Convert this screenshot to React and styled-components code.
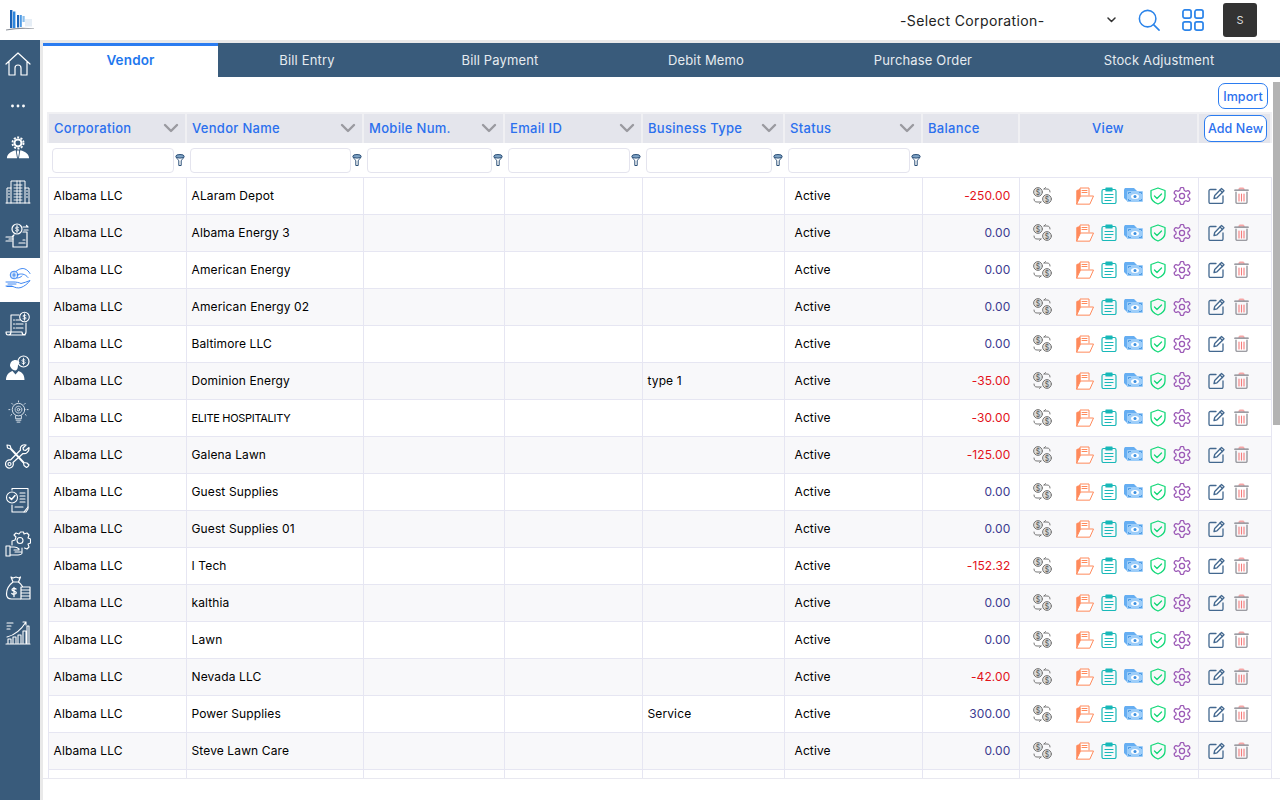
import React from 'react';
import styled, { createGlobalStyle } from 'styled-components';

const Global = createGlobalStyle`
  html, body { margin: 0; height: 100%; overflow: hidden; background: #fff; }
  body { font-family: Inter, "Liberation Sans", sans-serif; color: #000; }
  * { box-sizing: border-box; }
`;
const Page = styled.div`height: 800px; display: flex; flex-direction: column;`;
const Header = styled.header`height: 40px; flex: none; display: flex; align-items: center; background: #fff;`;
const LogoBox = styled.div`width: 40px; height: 40px; display: flex; align-items: center; justify-content: center;`;
const CorpSelect = styled.div`margin-left: auto; width: 216px; display: flex; align-items: center; justify-content: space-between; font-size: 14px; letter-spacing: .38px; color: #222;`;
const HeadIcon = styled.button`border: 0; background: none; padding: 0; display: flex; margin-left: 22px;`;
const Avatar = styled.div`width: 34px; height: 34px; margin: 0 23px 0 19px; background: #333; color: #ddd; border-radius: 3px; display: flex; align-items: center; justify-content: center; font-size: 11px;`;
const Body = styled.div`flex: 1; display: flex; min-height: 0;`;
const Side = styled.nav`width: 40px; flex: none; background: #395b7b; padding-top: 2px; display: flex; flex-direction: column;`;
const SideItem = styled.div`height: ${p => p.$h || 44}px; flex: none; display: flex; align-items: center; justify-content: center; padding-right: 4px; background: ${p => p.$active ? '#fff' : 'transparent'}; color: ${p => p.$active ? '#2b7cf0' : '#fff'};`;
const Content = styled.main`flex: 1; min-width: 0; display: flex; flex-direction: column; border-top: 3px solid #e9e9e9; border-left: 3px solid #e9e9e9;`;
const Tabs = styled.div`height: 34px; flex: none; display: grid; grid-template-columns: 175px 178px 208px 204px 230px 1fr; background: #395b7b;`;
const Tab = styled.div`display: flex; align-items: center; justify-content: center; font-size: 13px; letter-spacing: .15px; padding-bottom: 1px; ${p => p.$active ? 'background:#fff;color:#1f78ee;font-weight:600;font-size:13.5px;border-top:3px solid #2b7cf0;padding-bottom:3px;' : 'color:#e6ebf0;'}`;
const ScrollArea = styled.div`position: relative; margin-top: 5px; height: 696px; flex: none;`;
const Scroller = styled.div`height: 100%; overflow: hidden; padding-left: 4px;`;
const Thumb = styled.div`position: absolute; top: 0; right: 0; width: 7px; height: 343px; background: #b3b3b3;`;
const ImportRow = styled.div`height: 31px; width: 1221px; display: flex; justify-content: flex-end; padding: 1px 0 0 0;`;
const OutlineBtn = styled.button`
  width: ${p => p.$w}px; height: ${p => p.$h}px; border: 1px solid #2b7cf0; border-radius: 7px; background: #fff; color: #2b70ee;
  font: 500 12.5px Inter, sans-serif; padding: 0; letter-spacing: .1px;
`;
const Table = styled.table`width: 1223px; table-layout: fixed; border-collapse: collapse; font-size: 12px; margin-top: -1px;`;
const HeadCell = styled.th`
  height: 30px; padding: 0 6px 1px ${p => p.$pl ?? 5}px; background: #e4e5ec; border: 2px solid #f0f0f3; border-width: 2px 2px 0 2px; color: #2b70ee;
  font-weight: 500; font-size: 13px; letter-spacing: .3px; text-align: ${p => p.$center ? 'center' : 'left'}; white-space: nowrap;
`;
const HeadInner = styled.div`display: flex; align-items: center; justify-content: space-between;`;
const FilterCell = styled.td`height: 34px; padding: 1px 1px 0 4px; border-bottom: 1px solid #e6e6f2;`;
const FilterWrap = styled.div`display: flex; align-items: center; gap: 1px;`;
const FilterInput = styled.input`flex: 1; min-width: 0; height: 25px; border: 1px solid #e4e4ee; border-radius: 4px; background: #fff; outline: 0;`;
const Row = styled.tr`background: ${p => p.$alt ? '#f8f8fa' : '#fff'};`;
const Cell = styled.td`
  height: 37px; padding: 0 ${p => p.$right ? 8 : 4}px 0 ${p => p.$pl ?? 5}px; border: 1px solid #e6e6f2; white-space: nowrap; overflow: hidden;
  text-align: ${p => p.$right ? 'right' : 'left'}; letter-spacing: ${p => p.$caps ? '-.3px' : '.12px'}; font-size: ${p => p.$caps ? 11 : 12}px;
  color: ${p => p.$color || '#000'};
`;
const IconRow = styled.div`display: flex; align-items: center; gap: ${p => p.$gap}px; padding-left: ${p => p.$pl}px;`;
const Spacer = styled.span`width: ${p => p.$w}px; flex: none;`;
const IconSvg = styled.svg`display: block; flex: none;`;
const Footer = styled.div`flex: 1; border-top: 1px solid #e8e8f0; background: #fff;`;

const S = ({ w = 26, h, vb = '0 0 26 26', sw = 1.2, children, c = 'currentColor' }) => (
  <IconSvg width={w} height={h || w} viewBox={vb} fill="none" stroke={c} strokeWidth={sw} strokeLinecap="round" strokeLinejoin="round">{children}</IconSvg>
);

const Logo = () => (
  <IconSvg width="30" height="24" viewBox="0 0 30 24">
    <path d="M1 21.500 Q14 18.500 29 20.500 L29 21 Q14 20 1 22.500Z" fill="#8a8f98" />
    <rect x="5" y="2" width="2.400" height="18" fill="#1b63b8" />
    <rect x="8" y="3.500" width="2.400" height="16.500" fill="#2d86dd" />
    <rect x="12" y="7" width="2.200" height="12.500" fill="#1b63b8" />
    <rect x="15" y="7" width="1.800" height="12" fill="#4f9be4" />
    <rect x="17.500" y="8" width="2.200" height="6" fill="#8cbfec" />
    <rect x="20" y="11" width="7" height="7.500" fill="#e6eef6" />
  </IconSvg>
);
const IHome = () => <S w={26}><path d="M1 13 13 2l12 11M4 10.500V24h6v-7a3 3 0 0 1 6 0v7h6V10.500" /></S>;
const IDots = () => <S w={16} h={4} vb="0 0 16 4"><circle cx="2.500" cy="2" r=".8" fill="#fff" /><circle cx="8" cy="2" r=".8" fill="#fff" /><circle cx="13.500" cy="2" r=".8" fill="#fff" /></S>;
const IAdmin = () => (
  <S w={24} vb="0 0 26 26">
    <circle cx="13" cy="7.500" r="6" stroke="#fff" strokeWidth="2" strokeDasharray="2.200 1.600" strokeLinecap="butt" />
    <circle cx="13" cy="7.500" r="3.800" stroke="#fff" strokeWidth="2.200" />
    <path d="M1 24c0-4 4-7 9.500-8.500l1.500 8.500ZM25 24c0-4-4-7-9.500-8.500L14 24Z" fill="#fff" stroke="none" />
    <path d="M13 15l1.300 2-1.300 7-1.300-7Z" fill="#fff" stroke="none" />
  </S>
);
const IBuilding = () => (
  <S w={26} sw={1}>
    <path d="M6 24V2h14v22M2 24V9h4M24 24V9h-4M1 24h24" />
    <path d="M9 6h8M9 9h8M9 12h8M9 15h8M9 18h8M9 21h8M12 2v22M15 2v22" strokeWidth=".9" />
    <path d="M3.500 12h1M3.500 15h1M3.500 18h1M21.500 12h1M21.500 15h1M21.500 18h1" />
  </S>
);
const IBill = () => (
  <S w={26}>
    <circle cx="12" cy="6" r="5" /><path d="M13.500 4.500c-1-.8-3-.5-3 .6 0 1.500 3.200.6 3.200 2 0 1-2 1.400-3.200.6M12 2.500v7" strokeWidth=".9" />
    <path d="M8 13v11h14V9h-4M20 20h-6M20 17h-2" />
    <path d="M18 4h5M23 4l-1.500-1.500M19 7h4M1 14h6l2-2M1 18h6M4 16h4" />
  </S>
);
const IHands = () => (
  <S w={26} sw={.9}>
    <circle cx="9" cy="8" r="3.800" fill="#cfe2fa" /><path d="M9 6v4M7.700 8h2.600" strokeWidth=".8" />
    <path d="M11 4.500c3-3 7-3.500 9-2.500 2 .8 4 2.500 5 4.500M13 7.500c3-1 7-1 10 3M12 11c2 0 4-1 5-2" />
    <path d="M1 15h8c2 0 5 .5 7 1.500 3-.5 6-2 9-3-2 3-6 6-9 7-3 1-6 0-8-1H2M1 19h6M3 17h8" />
  </S>
);
const IInvoice = () => (
  <S w={26} sw={1.100}>
    <circle cx="19.500" cy="6" r="4.800" /><path d="M21 4.500c-1-.8-3-.5-3 .6 0 1.500 3.200.6 3.200 2 0 1-2 1.400-3.200.6M19.500 2.800v6.400" strokeWidth=".9" />
    <path d="M14 4H6v17c0 2-1 3-3 3h15c2 0 3-1 3-3v-9M6 24H3c-1 0-2-1-2-3h16c0 2 1 3 3 3" />
    <path d="M8.500 9h1M11 9h4M8.500 13h1M11 13h7M8.500 17h1M11 17h7" />
  </S>
);
const IPerson = () => (
  <S w={26}>
    <circle cx="18.500" cy="6.500" r="5.500" /><path d="M20 5c-1-.8-3-.5-3 .6 0 1.500 3.200.6 3.200 2 0 1-2 1.400-3.200.6M18.500 3.200v6.600" strokeWidth=".9" />
    <path d="M5 11c0-4 2.500-6 5.500-6 2 0 3.500 1 4 2.500L13 10c0 3-1 5.500-2.500 5.500S6 14 5 11Z" fill="#fff" stroke="none" />
    <path d="M1 25c0-5 3-8 6.500-9l3 3.500 3-3.500c3 1 6 3 6 9Z" fill="#fff" stroke="none" />
  </S>
);
const IBulb = () => (
  <S w={25} vb="0 0 26 26" sw={1} c="#dce4ec">
    <circle cx="13" cy="10" r="6.500" /><circle cx="13" cy="10" r="3.500" strokeDasharray="1.500 1" /><circle cx="13" cy="10" r="1.300" />
    <path d="M10 16.500v3h6v-3M10.500 21h5M11.500 23h3M13 1v1M4 10H3M23 10h-1M6 3.500l1 1M20 3.500l-1 1M5 16l1-1M21 16l-1-1" />
  </S>
);
const ITools = () => (
  <S w={26} sw={1.200}>
    <path d="M2 2l3 .5 1 3 13 14 3 .5 2 2-1 1.500-1.500 1-2.500-2-.5-2.500L5.500 6 2.500 5Z" />
    <path d="M24 4.500l-3.500 3-2-.5-.5-2 3-3c-3-1-6.500 1.500-5.500 5L5.500 17c-3-.5-5 1.500-5 4 0 3 2.500 4.500 4.500 4 2.500-.5 4-3 3-5.500L18 10.500c3 1 6.500-2 6-6Z" />
    <circle cx="4.500" cy="21" r="1.500" />
  </S>
);
const ICheckDoc = () => (
  <S w={26} sw={1.100}>
    <path d="M7 3V1.500h16V22l-2 3H7v-7" />
    <circle cx="7" cy="10.500" r="5.500" /><path d="M4.500 10.500l2 2 3.500-4" strokeWidth="1.500" />
    <path d="M15 6h5M15 9h5M15 12h5M15 15h5M10 20h8M19 25l4-5" />
  </S>
);
const IGearHand = () => (
  <S w={26} sw={1.100}>
    <path d="M7 14V10l3-1 1-3-2-2 2-2 3 1 1.500-2h3L19 3l3-1 2 2-1 3 2.500 1v4l-2.500 1 1 3-2 2-2.500-1" />
    <circle cx="15" cy="9.500" r="3" />
    <path d="M1 15h4v10H1ZM5 16h4c2 0 4 1 5 2v1H9M5 24h8c2 0 4-1 4-2v-5M10 21h6" />
  </S>
);
const IMoneyBag = () => (
  <S w={26} sw={1.200}>
    <path d="M6 2l2 1 3-1 3 1 1.500-1-2 5H8ZM8 7C4 10 1.500 14 1.500 19c0 3.500 2.500 5 5 5h9" />
    <path d="M13.500 7c2 1.500 3 3 4 4.500" />
    <path d="M11 14c-1-1-4-1-4 .8s4.300.8 4.300 3c0 1.500-3 2-4.500.7M9 12.500v9" strokeWidth="1.300" />
    <path d="M16 12h9v12h-9ZM16 15h9M16 18h9M16 21h9" />
  </S>
);
const IChart = () => (
  <S w={26} sw={1.100}>
    <path d="M1 25h24M3 24v-4h3v4M8 24v-6h3v6M13 24v-8h3v8M18 24V12h3v12M22 24V7h2v17" />
    <path d="M2 18C10 16 16 11 21 3M21 3h-3M21 3v3" />
    <path d="M2 4h6M2 7h4M2 10h3" />
  </S>
);

const Chevron = () => <S w={16} h={10} vb="0 0 16 10" sw={2.400} c="#9a9aa0"><path d="M2 2l6 6 6-6" /></S>;
const Funnel = () => (
  <IconSvg width="10" height="12" viewBox="0 0 10 12" fill="none" stroke="#2c5078" strokeWidth="1">
    <ellipse cx="5" cy="2.300" rx="4.200" ry="1.800" fill="#7fa3c5" />
    <path d="M1 3c1 2 2.800 3 2.800 4v4.500h2.400V7C6.200 6 8 5 9 3" />
  </IconSvg>
);
const Exchange = () => (
  <S w={19} h={17} vb="0 0 19 17" sw={1} c="#777">
    <circle cx="5" cy="5" r="4.400" fill="#dcdcdc" /><circle cx="14" cy="12" r="4.400" fill="#dcdcdc" />
    <text x="5" y="7.500" fontSize="7" textAnchor="middle" fill="#555" stroke="none" fontFamily="Inter">$</text>
    <text x="14" y="14.500" fontSize="7" textAnchor="middle" fill="#555" stroke="none" fontFamily="Inter">$</text>
    <path d="M11 2h3c2 0 3 1 3 3M11 2l1.500-1.500M1 12c0 2 1 3 3 3h4M8 15l-1.500 1.500" />
  </S>
);
const Folder = () => (
  <S w={18} vb="0 0 18 18" sw={1} c="#ff8a5c">
    <path d="M4 9V1h9v7" fill="#fff" />
    <path d="M6 3.500h5M6 5.500h5" />
    <path d="M.8 16.800V3.500L4 2.500V11Z" fill="#ff8a5c" />
    <path d="M.8 16.800 4.500 9h13l-3.500 7.800Z" fill="#fff" />
  </S>
);
const Clip = () => (
  <S w={16} h={17} vb="0 0 16 17" sw={1.200} c="#19b8b8">
    <rect x="1" y="2.500" width="14" height="14" rx="1.500" />
    <rect x="5" y="1" width="6" height="3" fill="#19b8b8" />
    <path d="M4 7.500h8M4 10.500h8M4 13.500h6" />
  </S>
);
const Money = () => (
  <IconSvg width="19" height="15" viewBox="0 0 19 15">
    <path d="M0 1.500 1 0h9l3 3L4 14 0 10Z" fill="#66aef2" />
    <rect x="3" y="3" width="16" height="11" rx="1" fill="#9ccdf9" />
    <path d="M4.500 6V4.500H7M17.500 6V4.500H15M4.500 11v1.500H7M17.500 11v1.500H15" stroke="#3b8fe0" fill="none" strokeWidth=".8" />
    <ellipse cx="11" cy="8.500" rx="4" ry="2.500" fill="#fff" />
    <circle cx="11" cy="8.500" r="1.500" fill="#3b8fe0" />
  </IconSvg>
);
const Shield = () => (
  <S w={16} h={18} vb="0 0 16 18" sw={1.300} c="#12d878">
    <path d="M8 1l7 2.500V9c0 4-3 6.500-7 8-4-1.500-7-4-7-8V3.500Z" />
    <path d="M4.500 9l2.500 2.500L11.500 7" />
  </S>
);
const Gear = () => (
  <S w={18} vb="1.500 1.500 21 21" sw={1.500} c="#9b59b6">
    <path d="M12.220 2h-.44a2 2 0 0 0-2 2v.18a2 2 0 0 1-1 1.730l-.43.250a2 2 0 0 1-2 0l-.15-.080a2 2 0 0 0-2.730.730l-.22.380a2 2 0 0 0 .730 2.730l.150.100a2 2 0 0 1 1 1.720v.510a2 2 0 0 1-1 1.740l-.150.090a2 2 0 0 0-.730 2.730l.220.380a2 2 0 0 0 2.730.730l.150-.080a2 2 0 0 1 2 0l.430.250a2 2 0 0 1 1 1.730V20a2 2 0 0 0 2 2h.44a2 2 0 0 0 2-2v-.18a2 2 0 0 1 1-1.730l.430-.250a2 2 0 0 1 2 0l.150.080a2 2 0 0 0 2.730-.730l.220-.390a2 2 0 0 0-.730-2.730l-.150-.080a2 2 0 0 1-1-1.740v-.500a2 2 0 0 1 1-1.740l.150-.090a2 2 0 0 0 .730-2.730l-.220-.380a2 2 0 0 0-2.730-.730l-.150.080a2 2 0 0 1-2 0l-.430-.250a2 2 0 0 1-1-1.730V4a2 2 0 0 0-2-2z" />
    <circle cx="12" cy="12" r="3" />
  </S>
);
const Edit = () => (
  <S w={17} vb="0 0 17 17" sw={1.300} c="#43688f">
    <path d="M8 2.500H2.500c-1 0-1.500.5-1.500 1.500v11c0 1 .5 1.500 1.500 1.500h11c1 0 1.500-.5 1.500-1.500V9" />
    <path d="M6 11.500l.7-3L13.500 1.500l2.500 2.300-7 7Z" fill="#fff" />
    <path d="M12 3l2.500 2.500" />
  </S>
);
const Trash = () => (
  <S w={15} h={17} vb="0 0 15 17" sw={1.100} c="#7d7d85">
    <path d="M5 2.500c0-1 .5-1.500 1-1.500h3c.5 0 1 .5 1 1.500" stroke="#f6a6a6" fill="#f6a6a6" />
    <path d="M.8 3.200h13.400" strokeWidth="1.300" />
    <path d="M2 5v10.500c0 .5.300.8.800.8h9.400c.5 0 .8-.3.800-.8V5" />
    <path d="M5 7v7M7.500 7v7M10 7v7" stroke="#f47c7c" />
  </S>
);

const sideItems = [
  [IHome, 44], [IDots, 40], [IAdmin], [IBuilding], [IBill], [IHands], [IInvoice], [IPerson], [IBulb], [ITools], [ICheckDoc], [IGearHand], [IMoneyBag], [IChart],
];
const tabs = ['Vendor', 'Bill Entry', 'Bill Payment', 'Debit Memo', 'Purchase Order', 'Stock Adjustment'];
const widths = [138, 177, 141, 138, 142, 138, 97, 179, 73];
const heads = ['Corporation', 'Vendor Name', 'Mobile Num.', 'Email ID', 'Business Type', 'Status'];
const rows = [
  ['ALaram Depot', '', '-250.00'], ['Albama Energy 3', '', '0.00'], ['American Energy', '', '0.00'], ['American Energy 02', '', '0.00'],
  ['Baltimore LLC', '', '0.00'], ['Dominion Energy', 'type 1', '-35.00'], ['ELITE HOSPITALITY', '', '-30.00'], ['Galena Lawn', '', '-125.00'],
  ['Guest Supplies', '', '0.00'], ['Guest Supplies 01', '', '0.00'], ['I Tech', '', '-152.32'], ['kalthia', '', '0.00'],
  ['Lawn', '', '0.00'], ['Nevada LLC', '', '-42.00'], ['Power Supplies', 'Service', '300.00'], ['Steve Lawn Care', '', '0.00'],
];

export default function App() {
  return (
    <Page>
      <Global />
      <Header>
        <LogoBox><Logo /></LogoBox>
        <CorpSelect>
          <span>-Select Corporation-</span>
          <S w={9} h={6} vb="0 0 9 6" sw={1.500} c="#333"><path d="M1 1l3.500 3.500L8 1" /></S>
        </CorpSelect>
        <HeadIcon>
          <S w={22} vb="0 0 24 24" sw={1.700} c="#2b84ea"><circle cx="10.500" cy="10.500" r="9" /><path d="M17 17l6 6" /></S>
        </HeadIcon>
        <HeadIcon>
          <S w={22} vb="0 0 23 23" sw={1.800} c="#2b84ea">
            <rect x="1" y="1" width="8.500" height="8.500" rx="2" /><rect x="13.500" y="1" width="8.500" height="8.500" rx="2" />
            <rect x="1" y="13.500" width="8.500" height="8.500" rx="2" /><rect x="13.500" y="13.500" width="8.500" height="8.500" rx="2" />
          </S>
        </HeadIcon>
        <Avatar>S</Avatar>
      </Header>
      <Body>
        <Side>
          {sideItems.map(([I, h], i) => <SideItem key={i} $h={h} $active={i === 5}><I /></SideItem>)}
        </Side>
        <Content>
          <Tabs>{tabs.map((t, i) => <Tab key={t} $active={i === 0}>{t}</Tab>)}</Tabs>
          <ScrollArea>
            <Scroller>
              <ImportRow><OutlineBtn $w={50} $h={26}>Import</OutlineBtn></ImportRow>
              <Table>
                <colgroup>{widths.map((w, i) => <col key={i} width={w} />)}</colgroup>
                <thead>
                  <tr>
                    {heads.map(h => <HeadCell key={h}><HeadInner><span>{h}</span><Chevron /></HeadInner></HeadCell>)}
                    <HeadCell>Balance</HeadCell>
                    <HeadCell $center>View</HeadCell>
                    <HeadCell $pl={5}><OutlineBtn $w={63} $h={27}>Add New</OutlineBtn></HeadCell>
                  </tr>
                  <tr>
                    {heads.map(h => <FilterCell key={h}><FilterWrap><FilterInput /><Funnel /></FilterWrap></FilterCell>)}
                    <FilterCell /><FilterCell /><FilterCell />
                  </tr>
                </thead>
                <tbody>
                  {rows.map((r, i) => (
                    <Row key={i} $alt={i % 2 === 1}>
                      <Cell>Albama LLC</Cell>
                      <Cell $caps={r[0] === r[0].toUpperCase()}>{r[0]}</Cell>
                      <Cell /><Cell />
                      <Cell>{r[1]}</Cell>
                      <Cell $pl={10}>Active</Cell>
                      <Cell $right $color={r[2].startsWith('-') ? '#e3131b' : '#3b3b8f'}>{r[2]}</Cell>
                      <Cell $pl={0}>
                        <IconRow $gap={7} $pl={13}>
                          <Exchange /><Spacer $w={10} /><Folder /><Clip /><Money /><Shield /><Gear />
                        </IconRow>
                      </Cell>
                      <Cell $pl={0}>
                        <IconRow $gap={9} $pl={9}><Edit /><Trash /></IconRow>
                      </Cell>
                    </Row>
                  ))}
                  <Row $alt={false}>
                    {widths.map((w, i) => <Cell key={i} />)}
                  </Row>
                </tbody>
              </Table>
            </Scroller>
            <Thumb />
          </ScrollArea>
          <Footer />
        </Content>
      </Body>
    </Page>
  );
}
